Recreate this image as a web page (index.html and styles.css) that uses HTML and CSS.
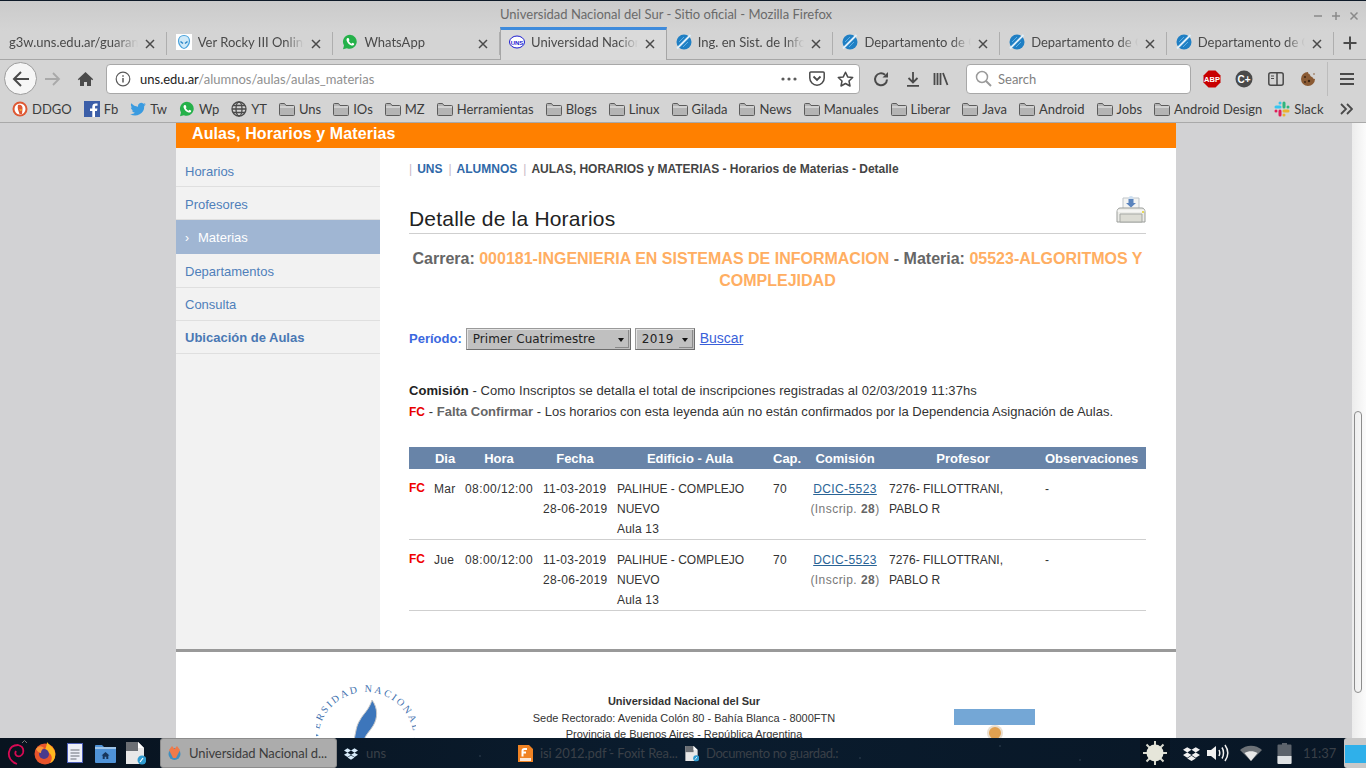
FILE: index.html
```html
<!DOCTYPE html>
<html lang="es">
<head>
<meta charset="utf-8">
<title>Universidad Nacional del Sur - Sitio oficial</title>
<link rel="stylesheet" href="styles.css">
</head>
<body>
<svg class="defs" aria-hidden="true">
  <symbol id="folder" viewBox="0 0 16 16"><path d="M.5 3.500a1 1 0 0 1 1-1h4l1.500 2h7.500a1 1 0 0 1 1 1v8a1 1 0 0 1-1 1h-13a1 1 0 0 1-1-1z" fill="#b4b4b4" stroke="#5c5c5c"/><path d="M1 6h14" stroke="#eee"/></symbol>
  <symbol id="wa" viewBox="0 0 16 16"><path d="M8 .8a7 7 0 0 0-6 10.600L1 15.200l3.900-1A7 7 0 1 0 8 .8z" fill="#25b14a"/><path d="M5.500 4c-.8.400-1.200 1.500-.8 2.700.7 2.200 2.500 4 4.800 4.800 1.200.3 2.300-.1 2.600-1 .2-.5.100-.8-.1-.9L10.400 8.800l-.9 1c-1.200-.5-2.200-1.500-2.800-2.700l.8-.9-.8-1.900c-.2-.4-1.100-.5-1.700-.3z" fill="#fff"/></symbol>
  <symbol id="dept" viewBox="0 0 16 16"><circle cx="8" cy="8" r="7.500" fill="#1f7fc4"/><path d="M1 14.500 14.500 1" stroke="#dff0fb" stroke-width="1.800"/><path d="M3 8 8 3M7 13l5-5" stroke="#5fb0e4"/></symbol>
  <symbol id="close" viewBox="0 0 12 12"><path d="M2 2l8 8M10 2l-8 8" stroke="#4a4a4a" stroke-width="1.500" fill="none"/></symbol>
  <symbol id="fileic" viewBox="0 0 22 24"><path d="M2 1h12l6 6v16H2z" fill="#e8e8e8"/><path d="M2 1h12v9H2z" fill="#6b6f74"/><path d="M14 1l6 6h-6z" fill="#fff"/><circle cx="18" cy="19" r="4.500" fill="#2f9bd0"/><path d="M16 21l3-4" stroke="#fff" stroke-width="1.200"/></symbol>
  <symbol id="dbx" viewBox="0 0 16 14"><path d="M4 1 8 3.500 4 6 0 3.500zM12 1l4 2.500L12 6 8 3.500zM4 6l4 2.500L4 11 0 8.500zM12 6l4 2.500-4 2.500-4-2.500zM4 11.700l4-2.500 4 2.500-4 2.300z" fill="currentColor"/></symbol>
</svg>

<header class="chrome">
  <div class="titlebar">
    <span class="wintitle">Universidad Nacional del Sur - Sitio oficial - Mozilla Firefox</span>
    <span class="winctl">
      <svg width="10" height="10" viewBox="0 0 10 10"><path d="M1 5h8" stroke="#8a8a8a" stroke-width="1.500"/></svg>
      <svg width="10" height="10" viewBox="0 0 10 10"><path d="M1 5h8M5 1v8" stroke="#8a8a8a" stroke-width="1.500"/></svg>
      <svg width="10" height="10" viewBox="0 0 10 10"><path d="M1.500 1.500l7 7M8.500 1.500l-7 7" stroke="#8a8a8a" stroke-width="1.500"/></svg>
    </span>
  </div>
  <div class="tabs">
    <div class="tab tab-nofav"><span class="tabtext">g3w.uns.edu.ar/guarani/alumno</span><svg class="tabx" width="12" height="12"><use href="#close"/></svg></div>
    <div class="tab"><svg class="fav" width="16" height="16" viewBox="0 0 16 16"><rect width="16" height="16" fill="#fff"/><path d="M8 1.500c3.500 0 5.500 2.500 5.500 5.500 0 3-3 7.500-5.500 7.500S2.500 10 2.500 7c0-3 2-5.500 5.500-5.500z" fill="#cfe9f8" stroke="#4aa3dc" stroke-width="1.200"/><path d="M4.500 7.500 7 9.500M11.500 7.500 9 9.500" stroke="#2b86c7" stroke-width="1.500"/></svg><span class="tabtext">Ver Rocky III Online Gratis</span><svg class="tabx" width="12" height="12"><use href="#close"/></svg></div>
    <div class="tab"><svg class="fav" width="16" height="16"><use href="#wa"/></svg><span class="tabtext">WhatsApp</span><svg class="tabx" width="12" height="12"><use href="#close"/></svg></div>
    <div class="tab tab-active"><svg class="fav" width="16" height="16" viewBox="0 0 16 16"><ellipse cx="8" cy="8" rx="7.500" ry="6" fill="#fff" stroke="#1a1ad0"/><text x="8" y="10.500" text-anchor="middle" class="favtext">UNS</text></svg><span class="tabtext">Universidad Nacional del Sur</span><svg class="tabx" width="12" height="12"><use href="#close"/></svg></div>
    <div class="tab"><svg class="fav" width="16" height="16"><use href="#dept"/></svg><span class="tabtext">Ing. en Sist. de Información</span><svg class="tabx" width="12" height="12"><use href="#close"/></svg></div>
    <div class="tab"><svg class="fav" width="16" height="16"><use href="#dept"/></svg><span class="tabtext">Departamento de Ciencias</span><svg class="tabx" width="12" height="12"><use href="#close"/></svg></div>
    <div class="tab"><svg class="fav" width="16" height="16"><use href="#dept"/></svg><span class="tabtext">Departamento de Ciencias</span><svg class="tabx" width="12" height="12"><use href="#close"/></svg></div>
    <div class="tab tab-last"><svg class="fav" width="16" height="16"><use href="#dept"/></svg><span class="tabtext">Departamento de Ciencias</span><svg class="tabx" width="12" height="12"><use href="#close"/></svg></div>
    <div class="newtab"><svg width="16" height="16" viewBox="0 0 16 16"><path d="M1.500 8h13M8 1.500v13" stroke="#4a4a4a" stroke-width="2"/></svg></div>
  </div>
  <div class="navbar">
    <div class="backbtn"><svg width="18" height="18" viewBox="0 0 18 18"><path d="M17 9H2M9 2 2 9l7 7" fill="none" stroke="#4a4a4a" stroke-width="2"/></svg></div>
    <div class="fwd"><svg width="16" height="16" viewBox="0 0 16 16"><path d="M0 8h14M8 2l6 6-6 6" fill="none" stroke="#a9a9a9" stroke-width="1.800"/></svg></div>
    <div class="home"><svg width="17" height="16" viewBox="0 0 17 16"><path d="M8.500 1 .8 8.300l1 1 1.200-1V15h4v-4h3v4h4V8.300l1.200 1 1-1z" fill="#4a4a4a"/></svg></div>
    <div class="urlbar">
      <svg class="urlinfo" width="16" height="16" viewBox="0 0 16 16"><circle cx="8" cy="8" r="6.800" fill="none" stroke="#5a5a5a" stroke-width="1.200"/><path d="M8 7v4.500M8 4.200v1.500" stroke="#5a5a5a" stroke-width="1.500"/></svg>
      <span class="urltext"><span class="urldomain">uns.edu.ar</span>/alumnos/aulas/aulas_materias</span>
      <span class="urlact"><svg width="16" height="4" viewBox="0 0 16 4"><circle cx="2" cy="2" r="1.600" fill="#5a5a5a"/><circle cx="8" cy="2" r="1.600" fill="#5a5a5a"/><circle cx="14" cy="2" r="1.600" fill="#5a5a5a"/></svg></span>
      <span class="urlact"><svg width="16" height="15" viewBox="0 0 16 15"><path d="M1.800 1h12.400a1 1 0 0 1 1 1v5a7.200 7.200 0 0 1-14.400 0V2a1 1 0 0 1 1-1z" fill="none" stroke="#4a4a4a" stroke-width="1.500"/><path d="M4.500 5.500 8 9l3.500-3.500" fill="none" stroke="#4a4a4a" stroke-width="1.800"/></svg></span>
      <span class="urlact"><svg width="17" height="16" viewBox="0 0 17 16"><path d="M8.500 1.200l2.200 4.700 5 .6-3.700 3.500 1 5-4.500-2.500L4 15l1-5L1.300 6.500l5-.6z" fill="none" stroke="#4a4a4a" stroke-width="1.500" stroke-linejoin="round"/></svg></span>
    </div>
    <div class="nb nb-first"><svg width="16" height="16" viewBox="0 0 16 16"><path d="M14 8.500A6 6 0 1 1 12 3.800" fill="none" stroke="#4a4a4a" stroke-width="2"/><path d="M15 1v5.500H9.500z" fill="#4a4a4a"/></svg></div>
    <div class="nb"><svg width="14" height="16" viewBox="0 0 14 16"><path d="M7 1v10M2.500 7 7 11.500 11.500 7M1 14.800h12" fill="none" stroke="#4a4a4a" stroke-width="1.800"/></svg></div>
    <div class="nb nb-lib"><svg width="16" height="14" viewBox="0 0 16 14"><path d="M1.500 1v12M4.500 1v12M7.500 1v12M10 1l4.500 12" fill="none" stroke="#4a4a4a" stroke-width="1.800"/></svg></div>
    <div class="searchbar">
      <svg width="17" height="17" viewBox="0 0 17 17"><circle cx="7" cy="7" r="5.500" fill="none" stroke="#9a9a9a" stroke-width="1.500"/><path d="M11 11l5 5" stroke="#9a9a9a" stroke-width="2"/></svg>
      <span>Search</span>
    </div>
    <div class="nb nb-abp"><svg width="18" height="18" viewBox="0 0 18 18"><path d="M5.500.5h7l5 5v7l-5 5h-7l-5-5v-7z" fill="#c80000"/><text x="9" y="12" text-anchor="middle" class="abptext">ABP</text></svg></div>
    <div class="nb"><svg width="18" height="18" viewBox="0 0 18 18"><circle cx="9" cy="9" r="8.500" fill="#4a4a4a"/><text x="9" y="12.500" text-anchor="middle" class="cptext">C+</text></svg></div>
    <div class="nb"><svg width="16" height="14" viewBox="0 0 16 14"><rect x=".8" y=".8" width="14.400" height="12.400" rx="2" fill="none" stroke="#4a4a4a" stroke-width="1.500"/><path d="M9 1v12" stroke="#4a4a4a" stroke-width="1.500"/><path d="M3 4h3M3 6.500h3" stroke="#4a4a4a"/></svg></div>
    <div class="nb"><svg width="16" height="16" viewBox="0 0 16 16"><path d="M8 1a7 7 0 1 0 7 7c-1.500 0-2.500-.8-2.600-2C11 6 10 5 10 3.500 9 3.500 8 2.500 8 1z" fill="#8a5a33"/><circle cx="5" cy="6" r="1" fill="#3c2412"/><circle cx="9" cy="10" r="1.200" fill="#3c2412"/><circle cx="5" cy="11" r=".9" fill="#3c2412"/><circle cx="14" cy="3" r=".8" fill="#8a5a33"/></svg></div>
    <div class="navsep"></div>
    <div class="nb nb-menu"><svg width="14" height="12" viewBox="0 0 14 12"><path d="M0 1h14M0 6h14M0 11h14" stroke="#4a4a4a" stroke-width="1.800"/></svg></div>
  </div>
  <nav class="bookmarks">
    <span class="bm"><svg width="16" height="16" viewBox="0 0 16 16"><circle cx="8" cy="8" r="7.500" fill="#de5833"/><circle cx="8" cy="8" r="5.500" fill="#fff"/><path d="M6 4c3-1 5 1 4.500 4L10 13H7.500C6.500 10 5 7 6 4z" fill="#de5833"/><path d="M7 8.500h3l-1 1.500z" fill="#fc3"/></svg>DDGO</span>
    <span class="bm"><svg width="16" height="16" viewBox="0 0 16 16"><rect width="16" height="16" fill="#3b5ea8"/><path d="M11 16v-6h2l.4-2.500H11V6c0-.8.300-1.200 1.200-1.200h1.300V2.500c-.6-.1-1.300-.1-2-.1-2 0-3.200 1.200-3.200 3.300v1.800H6V10h2.300v6z" fill="#fff"/></svg>Fb</span>
    <span class="bm"><svg width="16" height="16" viewBox="0 0 16 16"><path d="M15.800 3.200c-.6.300-1.200.4-1.800.5.700-.4 1.100-1 1.400-1.700-.6.400-1.300.6-2 .8A3.200 3.200 0 0 0 8 5.700C5.400 5.600 3 4.300 1.300 2.300c-.8 1.400-.4 3.300 1 4.300-.5 0-1-.2-1.400-.4 0 1.600 1.100 2.900 2.600 3.200-.5.100-1 .2-1.500.1.400 1.300 1.600 2.200 3 2.200A6.500 6.500 0 0 1 .2 13a9.100 9.100 0 0 0 14-8.100c.6-.5 1.200-1 1.600-1.700z" fill="#3a9be0"/></svg>Tw</span>
    <span class="bm"><svg width="16" height="16"><use href="#wa"/></svg>Wp</span>
    <span class="bm"><svg width="16" height="16" viewBox="0 0 16 16"><g fill="none" stroke="#4a4a4a" stroke-width="1.300"><circle cx="8" cy="8" r="7"/><ellipse cx="8" cy="8" rx="3" ry="7"/><path d="M1 8h14M2 4.500h12M2 11.500h12"/></g></svg>YT</span>
    <span class="bm"><svg width="16" height="16"><use href="#folder"/></svg>Uns</span>
    <span class="bm"><svg width="16" height="16"><use href="#folder"/></svg>IOs</span>
    <span class="bm"><svg width="16" height="16"><use href="#folder"/></svg>MZ</span>
    <span class="bm"><svg width="16" height="16"><use href="#folder"/></svg>Herramientas</span>
    <span class="bm"><svg width="16" height="16"><use href="#folder"/></svg>Blogs</span>
    <span class="bm"><svg width="16" height="16"><use href="#folder"/></svg>Linux</span>
    <span class="bm"><svg width="16" height="16"><use href="#folder"/></svg>Gilada</span>
    <span class="bm"><svg width="16" height="16"><use href="#folder"/></svg>News</span>
    <span class="bm"><svg width="16" height="16"><use href="#folder"/></svg>Manuales</span>
    <span class="bm"><svg width="16" height="16"><use href="#folder"/></svg>Liberar</span>
    <span class="bm"><svg width="16" height="16"><use href="#folder"/></svg>Java</span>
    <span class="bm"><svg width="16" height="16"><use href="#folder"/></svg>Android</span>
    <span class="bm"><svg width="16" height="16"><use href="#folder"/></svg>Jobs</span>
    <span class="bm"><svg width="16" height="16"><use href="#folder"/></svg>Android Design</span>
    <span class="bm"><svg width="16" height="16" viewBox="0 0 16 16" fill="none" stroke-width="3" stroke-linecap="round"><path d="M6 2v.1M2 6h4" stroke="#36c5f0"/><path d="M14 6v.1M10 2v4" stroke="#2eb67d"/><path d="M10 14v-.1M14 10h-4" stroke="#ecb22e"/><path d="M2 10v.1M6 14v-4" stroke="#e01e5a"/></svg>Slack</span>
    <svg class="bmmore" width="13" height="12" viewBox="0 0 13 12"><path d="M1 1l5 5-5 5M7 1l5 5-5 5" fill="none" stroke="#4a4a4a" stroke-width="1.800"/></svg>
  </nav>
</header>

<div class="viewport">
  <div class="scrollarea">
    <div class="page">
      <div class="pagehead">Aulas, Horarios y Materias</div>
      <div class="pagebody">
        <aside class="sidebar">
          <a class="side">Horarios</a>
          <a class="side">Profesores</a>
          <a class="side side-active"><span class="chev">›</span>Materias</a>
          <a class="side side-tall">Departamentos</a>
          <a class="side side-low">Consulta</a>
          <a class="side side-low side-bold">Ubicación de Aulas</a>
        </aside>
        <main class="main">
          <div class="crumbs"><span class="bar">|</span><a>UNS</a><span class="bar">|</span><a>ALUMNOS</a><span class="bar">|</span><span class="crumbcur">AULAS, HORARIOS y MATERIAS - Horarios de Materias - Detalle</span></div>
          <div class="heading">
            <h1>Detalle de la Horarios</h1>
            <svg class="printer" width="30" height="28" viewBox="0 0 30 28"><path d="M7 2h16v11H7z" fill="#f4f4f2" stroke="#bfc5c9"/><circle cx="15" cy="2.500" r="2.500" fill="#cfe0f0"/><path d="M12.500 3h5v4h2.500l-5 4.500-5-4.500h2.500z" fill="#5b84bd"/><path d="M4 12h22c2 0 3 2 3 4v10H1V16c0-2 1-4 3-4z" fill="#ecece8" stroke="#9a9d9a"/><path d="M4 18h22v8H4z" fill="#dcdcd4" stroke="#a5a8a4"/><path d="M1.500 15h27" stroke="#fff"/><rect x="26" y="15" width="2" height="2" fill="#e6d95a"/></svg>
          </div>
          <h2 class="carrera">Carrera: <span class="hl">000181-INGENIERIA EN SISTEMAS DE INFORMACION</span> - Materia: <span class="hl">05523-ALGORITMOS Y COMPLEJIDAD</span></h2>
          <div class="periodo">
            <b class="perlabel">Período:</b>
            <span class="sel sel-a">Primer Cuatrimestre<span class="selarrow"></span></span>
            <span class="sel sel-b">2019<span class="selarrow"></span></span>
            <a class="buscar">Buscar</a>
          </div>
          <div class="notes">
            <p class="note1"><b>Comisión</b> - Como Inscriptos se detalla el total de inscripciones registradas al 02/03/2019 11:37hs</p>
            <p class="note2"><b class="red">FC</b> - <b class="grey">Falta Confirmar</b> - Los horarios con esta leyenda aún no están confirmados por la Dependencia Asignación de Aulas.</p>
          </div>
          <table class="grid">
            <colgroup><col class="c0"><col class="c1"><col class="c2"><col class="c3"><col class="c4"><col class="c5"><col class="c6"><col class="c7"><col class="c8"></colgroup>
            <thead>
              <tr><th></th><th class="p1">Dia</th><th class="p2">Hora</th><th class="p3">Fecha</th><th class="p4">Edificio - Aula</th><th class="p5">Cap.</th><th class="p6">Comisión</th><th class="p7">Profesor</th><th class="p8">Observaciones</th></tr>
            </thead>
            <tbody>
              <tr><td class="fc">FC</td><td class="p1">Mar</td><td class="p2 ts">08:00/12:00</td><td class="p3 ds">11-03-2019<br>28-06-2019</td><td class="p4 caps">PALIHUE - COMPLEJO NUEVO<br><span class="aula">Aula 13</span></td><td class="p5">70</td><td class="p6 ctr"><a class="dcic">DCIC-5523</a><br><span class="insc">(Inscrip. <b>28</b>)</span></td><td class="p7 caps">7276- FILLOTTRANI, PABLO R</td><td class="p8">-</td></tr>
              <tr><td class="fc">FC</td><td class="p1">Jue</td><td class="p2 ts">08:00/12:00</td><td class="p3 ds">11-03-2019<br>28-06-2019</td><td class="p4 caps">PALIHUE - COMPLEJO NUEVO<br><span class="aula">Aula 13</span></td><td class="p5">70</td><td class="p6 ctr"><a class="dcic">DCIC-5523</a><br><span class="insc">(Inscrip. <b>28</b>)</span></td><td class="p7 caps">7276- FILLOTTRANI, PABLO R</td><td class="p8">-</td></tr>
            </tbody>
          </table>
        </main>
      </div>
      <footer class="foot">
        <svg class="seal" width="100" height="100" viewBox="0 0 100 100">
          <defs><path id="sealarc" d="M7.600 78.500A48 48 0 1 1 85.100 88.700"/></defs>
          <text class="sealtext"><textPath href="#sealarc">UNIVERSIDAD NACIONAL DEL SUR</textPath></text>
          <path d="M56 16c6 8 6 18 1 26-3 5-7 8-9 14H38c2-8 2-14 6-20 3-6 9-10 12-20z" fill="#3d76bb" stroke="#c8c8c8"/>
        </svg>
        <div class="footaddr">
          <b>Universidad Nacional del Sur</b><br>
          Sede Rectorado: Avenida Colón 80 - Bahía Blanca - 8000FTN<br>
          Provincia de Buenos Aires - República Argentina
        </div>
        <div class="flag"><div class="flagblue"></div><div class="flagwhite"><span class="flagsun"></span></div></div>
      </footer>
    </div>
  </div>
  <div class="scrollbar"><div class="thumb"></div></div>
</div>

<footer class="taskbar">
  <div class="launch">
    <span class="li"><svg width="26" height="28" viewBox="0 0 26 28"><path d="M15 25C9 23 6 18 7 13 8 8 12 6 16 6c4 1 6 4 5 8-1 3-4 4-6 3-2-1-2-3-1-5" fill="none" stroke="#d70a53" stroke-width="1.800"/><path d="M20 4l2.500-2.500L25 4" fill="none" stroke="#777" stroke-width="1"/></svg></span>
    <span class="li"><svg width="24" height="24" viewBox="0 0 24 24"><circle cx="12" cy="13" r="10.500" fill="#e8542c"/><path d="M14 1c2 3 6 4 8 10 1 5-1 10-5 11 3-4 2-8-1-10-1 1-4 0-5-1 1-3 3-6 3-10z" fill="#ffb81f"/><circle cx="11" cy="13" r="5" fill="#4a3a8c"/><path d="M3 8c3-4 6-3 8-1-2 1-3 3-3 5-2 0-4-2-5-4z" fill="#f7953a"/></svg></span>
    <span class="li"><svg width="16" height="20" viewBox="0 0 16 20"><rect x=".5" y=".5" width="15" height="19" fill="#eef0f8" stroke="#4d5fb8"/><path d="M3.500 7h9M3.500 10h9M3.500 13h9M3.500 16h6" stroke="#6a6f78"/></svg></span>
    <span class="li"><svg width="21" height="19" viewBox="0 0 21 19"><path d="M0 2a1 1 0 0 1 1-1h6l2 2h12v15a1 1 0 0 1-1 1H1a1 1 0 0 1-1-1z" fill="#4f93d8"/><path d="M0 4h21" stroke="#b8d4ee" stroke-width="1.500"/><path d="M10.500 8l-4 3.500h1.200V15h2v-2.200h1.600V15h2v-3.500h1.200z" fill="#17365c"/></svg></span>
    <span class="li"><svg width="22" height="24"><use href="#fileic"/></svg></span>
  </div>
  <div class="winlist">
    <div class="win win-active"><svg width="15" height="16" viewBox="0 0 15 16"><circle cx="7.500" cy="9" r="6" fill="#3f8fc0"/><path d="M2 5l3-4 2.500 3L10 1l3 4-4 8H6z" fill="#ef7a4a"/></svg><span>Universidad Nacional d...</span></div>
    <div class="win win-dbx"><svg class="dbxwin" width="14" height="13"><use href="#dbx"/></svg><span>uns</span></div>
    <div class="win win-fox"><svg width="15" height="17" viewBox="0 0 15 17"><path d="M0 0h11l4 4v13H0z" fill="#f08324"/><path d="M9 4H6.500C5 4 4.500 5 4.500 6v5.500M3.500 7.500H8" stroke="#fff" stroke-width="2" fill="none"/><rect x="2" y="13" width="11" height="3" fill="#fff" opacity=".8"/></svg><span>isi 2012.pdf - Foxit Rea...</span></div>
    <div class="win win-doc"><svg width="15" height="17"><use href="#fileic"/></svg><span>Documento no guardad.:</span></div>
  </div>
  <div class="tray">
    <span class="sunbox"><svg width="26" height="26" viewBox="0 0 26 26"><g stroke="#d8d8cc" stroke-width="2"><path d="M13 1v24M1 13h24M4.500 4.500l17 17M21.500 4.500l-17 17"/></g><circle cx="13" cy="13" r="8.500" fill="#e6e6da"/></svg></span>
    <svg class="trdbx" width="17" height="15"><use href="#dbx"/></svg>
    <svg class="trvol" width="24" height="20" viewBox="0 0 24 20"><path d="M1 7h4l5-4v14l-5-4H1z" fill="#f0f0f0"/><path d="M13 7c1 2 1 4 0 6M16 4.500c2 3 2 8 0 11M19 2c3.500 5 3.500 11 0 16" fill="none" stroke="#f0f0f0" stroke-width="1.500"/></svg>
    <svg class="trwifi" width="22" height="16" viewBox="0 0 22 16"><path d="M0 5C6-.8 16-.8 22 5L11 16z" fill="#6d7277"/><path d="M4.500 8c4-2.500 9-2.500 13 0L11 16z" fill="#e8e8e8"/></svg>
    <svg class="trbat" width="15" height="21" viewBox="0 0 15 21"><path d="M5 0h5v1.500h3.500a1 1 0 0 1 1 1V20a1 1 0 0 1-1 1h-12a1 1 0 0 1-1-1V2.500a1 1 0 0 1 1-1H5z" fill="#5c636b"/><path d="M.5 13h14v7a1 1 0 0 1-1 1h-12a1 1 0 0 1-1-1z" fill="#dfe2e4"/></svg>
    <span class="clock">11:37</span>
    <span class="desk"><span class="deskblue"></span></span>
  </div>
</footer>
</body>
</html>
```

FILE: styles.css
```css
* { box-sizing: border-box; }
html, body { margin: 0; padding: 0; height: 768px; overflow: hidden; }
body { width: 1366px; display: flex; flex-direction: column; font-family: "Liberation Sans", Arial, sans-serif; background: #d2d2d4; }
.defs { position: absolute; width: 0; height: 0; }
a { cursor: pointer; }

/* Browser chrome */
.chrome { height: 122px; flex: none; background: linear-gradient(#cbcbcb, #d4d4d4 30px); color: #4a4a4a; font-family: Lato, sans-serif; border-top: 1px solid #0e1a28; }
.titlebar { height: 26px; display: flex; align-items: center; padding-left: 500px; }
.wintitle { font-size: 13px; color: #6a6a6a; }
.winctl { margin-left: auto; display: flex; gap: 8px; padding-right: 7px; padding-top: 4px; }
.tabs { height: 33px; display: flex; border-bottom: 1px solid #a6a6a6; }
.tab { width: 166.700px; height: 33px; display: flex; align-items: center; padding: 0 11px 3px 9px; position: relative; }
.tab::after { content: ""; position: absolute; right: 0; top: 5px; height: 23px; width: 1px; background: #aeaeae; }
.tab-active { background: #dadada; border: 1px solid #a6a6a6; border-top: 3px solid #3e8bdc; border-bottom: 0; padding: 0 10px 6px 8px; }
.tab-active::after { display: none; }
.fav { flex: none; margin-right: 6px; }
.favtext { font: bold 6px "Liberation Sans", sans-serif; fill: #1a1ad0; }
.tabtext { flex: 1; min-width: 0; white-space: nowrap; overflow: hidden; font-size: 13px; color: #4a4a4a; -webkit-mask-image: linear-gradient(90deg, #000 82%, transparent); mask-image: linear-gradient(90deg, #000 82%, transparent); }
.tabx { flex: none; margin: 3px 0 0 6px; }
.newtab { flex: 1; display: flex; align-items: center; justify-content: center; padding-bottom: 1px; }

.navbar { height: 37px; display: flex; align-items: center; padding-left: 4px; }
.backbtn { width: 33px; height: 33px; flex: none; border-radius: 50%; background: #f6f6f6; border: 1px solid #9c9c9c; display: flex; align-items: center; justify-content: center; }
.fwd { width: 24px; margin-left: 4px; flex: none; display: flex; justify-content: center; }
.home { width: 24px; margin-left: 8px; flex: none; display: flex; justify-content: center; }
.urlbar { width: 754px; height: 30px; margin-left: 9px; flex: none; background: #fff; border: 1px solid #a8a8a8; border-radius: 4px; display: flex; align-items: center; padding-left: 8px; font-size: 13px; }
.urlinfo { flex: none; }
.urltext { margin-left: 9px; flex: 1; color: #8f8f8f; white-space: nowrap; }
.urldomain { color: #222; }
.urlact { width: 28px; display: flex; justify-content: center; flex: none; }
.nb { width: 32px; flex: none; display: flex; justify-content: center; }
.nb-first { margin-left: 5px; }
.nb-lib { width: 24px; }
.nb-abp { margin-left: 5px; }
.abptext { font: bold 7.500px "Liberation Sans", sans-serif; fill: #fff; }
.cptext { font: bold 10px "Liberation Sans", sans-serif; fill: #fff; }
.searchbar { width: 225px; height: 30px; margin-left: 13px; flex: none; background: #fff; border: 1px solid #a8a8a8; border-radius: 4px; display: flex; align-items: center; padding-left: 8px; gap: 6px; font-size: 13px; color: #7f7f7f; }
.navsep { width: 1px; height: 34px; background: #bcbcbc; margin-left: 3px; flex: none; }
.nb-menu { margin-left: 3px; }

.bookmarks { height: 25px; display: flex; align-items: center; padding: 0 0 2px 12px; gap: 12px; font-size: 13px; color: #3c3c3c; position: relative; }
.bm { display: flex; align-items: center; gap: 4px; white-space: nowrap; }
.bmmore { position: absolute; left: 1340px; top: 6px; }

/* Page viewport */
.viewport { flex: 1; min-height: 0; display: flex; border-top: 1px solid #a9a9a9; }
.scrollarea { flex: 1; min-width: 0; overflow: hidden; }
.scrollbar { width: 14px; flex: none; background: linear-gradient(90deg, #ececec, #fbfbfb); padding: 288px 4px 0 2px; }
.thumb { height: 282px; border: 1px solid #8d8d8d; border-radius: 4px; }
.page { width: 1000px; margin: 0 auto; background: #fff; color: #333; font-size: 13px; }
.pagehead { height: 25px; background: #ff8000; color: #fff; font-weight: bold; font-size: 16px; line-height: 21px; padding-left: 16px; letter-spacing: .1px; }
.pagebody { display: flex; height: 501px; }
.sidebar { width: 204px; flex: none; background: #f2f2f2; padding-top: 6px; }
.side { display: block; height: 33px; line-height: 35px; padding-left: 9px; color: #4f7fba; border-bottom: 1px solid #dfdfdf; }
.side-low { line-height: 33px; }
.side-active { height: 34px; background: #a0b6d3; color: #fff; border-bottom: 0; }
.side-tall { height: 34px; }
.side-bold { font-weight: bold; color: #4a78b4; }
.chev { display: inline-block; width: 13px; font-size: 12px; }
.main { flex: 1; padding: 13px 30px 0 29px; min-width: 0; }
.crumbs { font-size: 12px; font-weight: bold; line-height: 16px; display: flex; color: #3f6fa8; }
.crumbs a { color: #2f68a8; }
.bar { color: #c9b8c6; font-weight: normal; margin: 0 5px 0 0; }
.crumbs a + .bar { margin-left: 6px; }
.crumbcur { color: #444; }
.heading { margin-top: 19px; height: 38px; display: flex; justify-content: space-between; align-items: flex-start; border-bottom: 1px solid #cfcfcf; }
.heading h1 { margin: 10px 0 0; font-size: 21px; line-height: 26px; font-weight: normal; color: #222; letter-spacing: .2px; }
.printer { flex: none; }
.carrera { margin: 14px 0 0; font-size: 16px; line-height: 22px; font-weight: bold; text-align: center; color: #666; }
.hl { color: #ffae62; }
.periodo { margin-top: 36px; height: 22px; display: flex; align-items: center; }
.perlabel { color: #3b68e0; margin-right: 4px; padding-bottom: 2px; }
.sel { height: 22px; background: #c0c0c0; border: 1px solid; border-color: #9a9a9a #6e6e6e #6e6e6e #9a9a9a; font: 12px/20px "DejaVu Sans", sans-serif; color: #222; padding-left: 6px; position: relative; letter-spacing: .05px; box-shadow: inset 1px 1px 0 #e4e4e4; }
.sel-a { width: 165px; }
.sel-b { width: 60px; margin-left: 4px; letter-spacing: .35px; }
.selarrow { position: absolute; right: 1px; top: 1px; bottom: 1px; width: 14px; border-right: 1px solid #8a8a8a; border-bottom: 1px solid #8a8a8a; }
.selarrow::after { content: ""; position: absolute; left: 3px; top: 8px; border: 3.500px solid transparent; border-top: 4px solid #111; border-bottom: 0; }
.buscar { margin-left: 5px; color: #3a5fd9; text-decoration: underline; font-size: 14px; padding-bottom: 2px; }
.notes { margin-top: 30px; line-height: 21px; color: #333; }
.notes p { margin: 0; }
.note1 { letter-spacing: .06px; }
.note2 { letter-spacing: .02px; }
.notes b { color: #222; }
.notes .red { color: #e80000; font-size: 12px; }
.notes .grey { color: #666; }
.grid { margin-top: 24px; width: 737px; table-layout: fixed; border-collapse: collapse; }
.c0 { width: 23px; } .c1 { width: 27px; } .c2 { width: 78px; } .c3 { width: 76px; } .c4 { width: 156px; } .c5 { width: 38px; } .c6 { width: 78px; } .c7 { width: 156px; } .c8 { width: 105px; }
.grid th { height: 22px; background: #6884a8; color: #fff; font-size: 13px; font-weight: bold; padding: 0; text-align: center; white-space: nowrap; }
.grid td { vertical-align: top; padding: 10px 0 0; font-size: 12px; letter-spacing: .3px; line-height: 20px; color: #333; border-bottom: 1px solid #cfcfcf; }
.grid .p1 { padding-left: 2px; padding-right: 3px; }
.grid .p2 { padding-left: 6px; padding-right: 4px; white-space: nowrap; }
.grid .p3 { padding-left: 6px; padding-right: 6px; white-space: nowrap; }
.grid .p4 { padding-left: 4px; padding-right: 6px; }
.grid .p5 { padding-left: 4px; padding-right: 6px; }
.grid .p6 { padding-left: 2px; padding-right: 4px; text-align: center; white-space: nowrap; }
.grid .p7 { padding-left: 4px; padding-right: 4px; }
.grid .p8 { padding-left: 4px; padding-right: 9px; }
.grid td.ts { letter-spacing: .42px; }
.grid td.ds { letter-spacing: .3px; }
.grid td.caps { letter-spacing: 0; }
.aula { letter-spacing: .2px; }
.grid td.fc { color: #f00000; font-weight: bold; font-size: 12px; letter-spacing: 0; line-height: 18px; }
.dcic { color: #2a6496; text-decoration: underline; letter-spacing: .4px; }
.insc { color: #777; letter-spacing: .45px; }
.insc b { color: #666; }
.foot { height: 100px; border-top: 3px solid #999; background: #fff; display: flex; align-items: flex-start; overflow: hidden; }
.seal { flex: none; margin: 32px 0 0 140px; }
.sealtext { font: 10px "Liberation Serif", serif; letter-spacing: 2.200px; fill: #3d6fae; }
.footaddr { width: 320px; flex: none; margin: 41px 0 0 108px; text-align: center; font-size: 11px; line-height: 16.500px; color: #333; }
.flag { width: 81px; flex: none; margin: 57px 0 0 110px; }
.flagblue { height: 16px; background: #74a7d6; }
.flagwhite { height: 20px; display: flex; justify-content: center; padding-top: 2px; }
.flagsun { width: 12px; height: 12px; border-radius: 50%; background: #e0a050; box-shadow: 0 0 0 2px #eadfd0; }

/* Desktop taskbar */
.taskbar { height: 30px; flex: none; display: flex; align-items: center; font-family: Lato, sans-serif; color: #3a4048; font-size: 13px;
  background: radial-gradient(1px 1px at 610px 12px, #4a5a6a, transparent), radial-gradient(1px 1px at 860px 20px, #4a5a6a, transparent), radial-gradient(1px 1px at 1000px 8px, #4a5a6a, transparent), radial-gradient(1px 1px at 1080px 22px, #4a5a6a, transparent), radial-gradient(1px 1px at 480px 18px, #4a5a6a, transparent), linear-gradient(90deg, #08131f, #0a1c2e 50%, #081625); }
.launch { width: 160px; flex: none; display: flex; align-items: center; }
.li { width: 30px; flex: none; display: flex; justify-content: center; }
.winlist { flex: none; display: flex; height: 30px; }
.win { width: 177px; height: 30px; display: flex; align-items: center; gap: 7px; padding-left: 7px; white-space: nowrap; }
.win svg { flex: none; }
.win-active { background: #acacac; border: 1px solid #8c8c8c; border-radius: 3px; color: #3c3c3c; padding-left: 6px; letter-spacing: -.1px; }
.win-dbx { gap: 8px; }
.dbxwin { color: #d8ecfa; }
.win-fox { margin-left: -4px; width: 166px; padding-left: 8px; letter-spacing: -.1px; }
.win-doc { padding-left: 8px; letter-spacing: -.4px; }
.tray { flex: 1; display: flex; align-items: center; height: 30px; }
.sunbox { margin-left: 287px; width: 30px; height: 30px; display: flex; align-items: center; justify-content: center; background: #06111c; flex: none; }
.trdbx { color: #f0f0f0; margin-left: 13px; flex: none; }
.trvol { margin-left: 6px; flex: none; }
.trwifi { margin-left: 10px; flex: none; }
.trbat { margin-left: 15px; flex: none; }
.clock { margin-left: 11px; font-size: 13px; color: #3a4048; }
.desk { margin-left: auto; width: 22px; height: 30px; background: #c8c8c8; border-radius: 3px 0 0 3px; padding: 7px 0 5px 1px; flex: none; display: block; }
.deskblue { display: block; width: 21px; height: 18px; background: #2fb0ea; }
```
